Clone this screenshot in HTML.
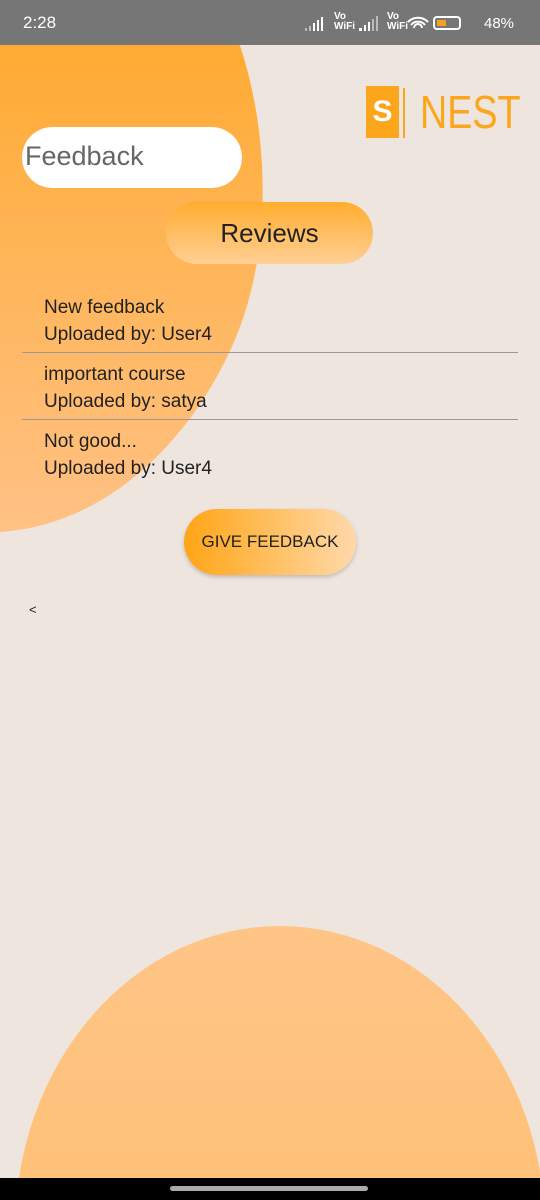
<!DOCTYPE html>
<html><head><meta charset="utf-8"><style>
*{margin:0;padding:0;box-sizing:border-box}
html,body{width:540px;height:1200px;overflow:hidden}
body{background:#efe5df;position:relative;font-family:"Liberation Sans",sans-serif;color:#222}
.abs{position:absolute}
</style></head><body>
<svg class="abs" style="left:0;top:0" width="540" height="1200">
<defs>
<linearGradient id="g1" x1="0" y1="0" x2="0" y2="1"><stop offset="0" stop-color="#ffab33"/><stop offset="1" stop-color="#ffc185"/></linearGradient>
<linearGradient id="g2" x1="0" y1="0" x2="0" y2="1"><stop offset="0" stop-color="#ffc587"/><stop offset="1" stop-color="#ffbb66"/></linearGradient>
</defs>
<path d="M0,40 L238,40 C270,130 275,260 228,355 C 185,445 105,525 0,532 Z" fill="url(#g1)"/>
<ellipse cx="280" cy="1230" rx="265" ry="304" fill="url(#g2)"/>
</svg>
<div class="abs" style="left:0;top:0;width:540px;height:45px;background:#767676;color:#fff">
<div class="abs" style="left:23px;top:13px;font-size:17px">2:28</div>
<svg class="abs" style="left:305px;top:14px" width="170" height="20">
<g fill="#bbb"><rect x="0" y="14" width="2" height="3"/><rect x="4" y="12" width="2" height="5"/></g>
<g fill="#fff"><rect x="8" y="9" width="2" height="8"/><rect x="12" y="6" width="2" height="11"/><rect x="16" y="3" width="2" height="14"/>
<rect x="54" y="14" width="3" height="3"/><rect x="59" y="11" width="2" height="6"/><rect x="63" y="8" width="2" height="9"/></g>
<g fill="#bbb"><rect x="67" y="5" width="2" height="12"/><rect x="71" y="2" width="2" height="15"/></g>
<path d="M103,8 a14,14 0 0 1 20,0 M106,11 a9,9 0 0 1 14,0 M109,14 a4,4 0 0 1 8,0" stroke="#fff" stroke-width="2" fill="none"/>
</svg>
<div class="abs" style="left:334px;top:12px;font-size:10px;line-height:10px;font-weight:bold">Vo<br>WiFi</div>
<div class="abs" style="left:387px;top:12px;font-size:10px;line-height:10px;font-weight:bold">Vo<br>WiFi</div>
<div class="abs" style="left:433px;top:16px;width:28px;height:14px;border:2px solid #fff;border-radius:4px"><div style="margin:2px;width:9px;height:6px;background:#f2a31b"></div></div>
<div class="abs" style="left:484px;top:15px;font-size:15px">48%</div>
</div>
<div class="abs" style="left:366px;top:86px;width:33px;height:52px;background:#fca61b;color:#fff;font-size:30px;font-weight:bold;text-align:center;line-height:52px">S</div>
<div class="abs" style="left:403px;top:88px;width:2px;height:50px;background:#fca61b"></div>
<div class="abs" style="left:420px;top:84px;color:#fca61b;font-size:46px;line-height:56px;transform:scaleX(.82);transform-origin:left;white-space:nowrap">NEST</div>
<div class="abs" style="left:22px;top:127px;width:220px;height:61px;background:#fff;border-radius:31px;font-size:27px;color:#666;padding:14px 0 0 3px">Feedback</div>
<div class="abs" style="left:166px;top:202px;width:207px;height:62px;border-radius:31px;background:linear-gradient(#ffad2e,#ffcf95);font-size:26px;text-align:center;line-height:62px">Reviews</div>
<div class="abs" style="left:44px;top:294px;font-size:19px;line-height:27px">New feedback<br>Uploaded by: User4</div>
<div class="abs" style="left:22px;top:352px;width:496px;height:1px;background:#999"></div>
<div class="abs" style="left:44px;top:361px;font-size:19px;line-height:27px">important course<br>Uploaded by: satya</div>
<div class="abs" style="left:22px;top:419px;width:496px;height:1px;background:#999"></div>
<div class="abs" style="left:44px;top:428px;font-size:19px;line-height:27px">Not good...<br>Uploaded by: User4</div>
<div class="abs" style="left:184px;top:509px;width:172px;height:66px;border-radius:33px;background:linear-gradient(90deg,#ffa515,#ffd9aa);box-shadow:0 2px 4px rgba(0,0,0,.2);font-size:17px;text-align:center;line-height:66px">GIVE FEEDBACK</div>
<div class="abs" style="left:29px;top:602px;font-size:13px">&lt;</div>
<div class="abs" style="left:0;top:1178px;width:540px;height:22px;background:#000"><div class="abs" style="left:170px;top:8px;width:198px;height:5px;border-radius:3px;background:#aaa"></div></div>
</body></html>
